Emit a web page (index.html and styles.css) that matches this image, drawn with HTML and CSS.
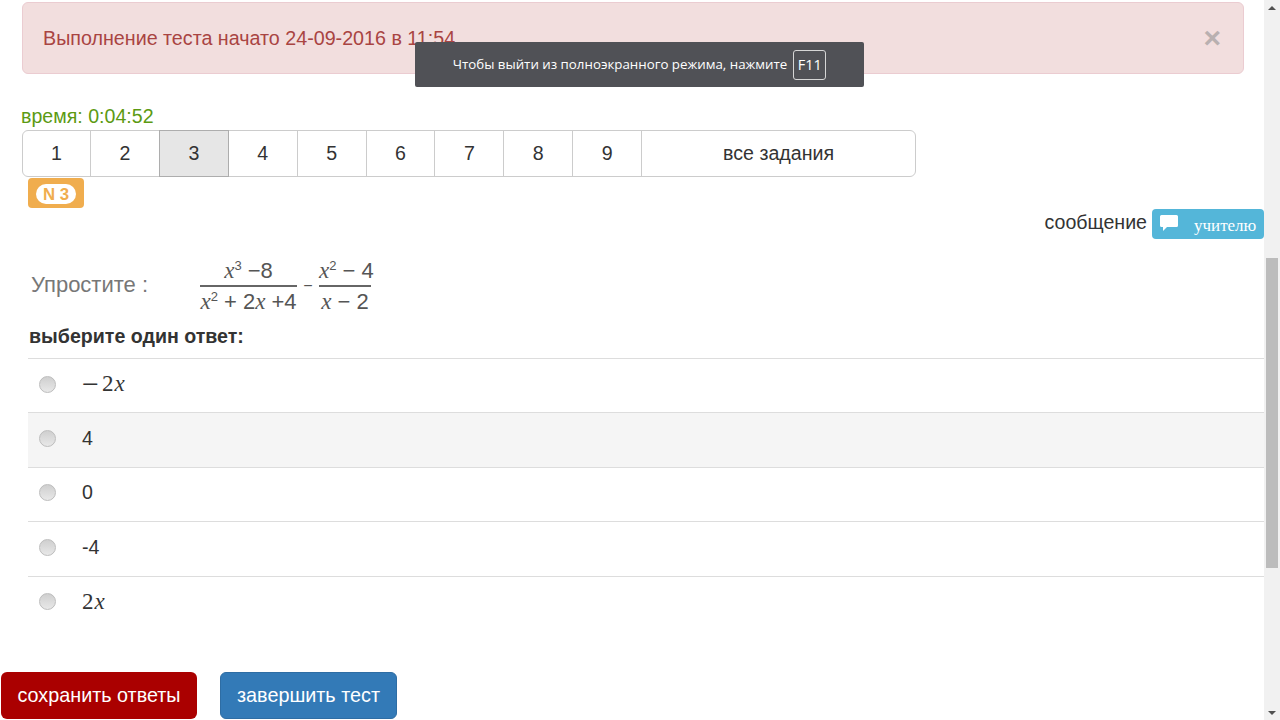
FILE: index.html
```html
<!DOCTYPE html>
<html lang="ru">
<head>
<meta charset="utf-8">
<title>Тест</title>
<link rel="stylesheet" href="styles.css">
</head>
<body>
<div class="page">
  <main class="content">
    <div class="alert">
      <span>Выполнение теста начато 24-09-2016 в 11:54</span>
      <span class="alert-close">×</span>
    </div>
    <div class="timer">время: 0:04:52</div>
    <nav class="tasks">
      <a class="task">1</a><a class="task">2</a><a class="task task-active">3</a><a class="task">4</a><a class="task">5</a><a class="task">6</a><a class="task">7</a><a class="task">8</a><a class="task">9</a><a class="task task-all">все задания</a>
    </nav>
    <div class="label-row"><span class="label"><span class="badge">N 3</span></span></div>
    <div class="message-row">
      <span class="message-text">сообщение</span>
      <button class="teacher-btn">
        <svg class="bubble" width="18" height="16" viewBox="0 0 18 16"><path d="M1.500 0h15A1.500 1.500 0 0 1 18 1.500v9a1.500 1.500 0 0 1-1.500 1.500H7l-4 4v-4H1.500A1.500 1.500 0 0 1 0 10.500v-9A1.500 1.500 0 0 1 1.500 0z" fill="#fff"/></svg>
        <span class="teacher-text">учителю</span>
      </button>
    </div>
    <div class="problem">
      <span class="problem-word">Упростите :</span>
      <span class="formula">
        <span class="frac frac-a"><span class="num"><i>x</i><sup>3</sup> −8</span><span class="den"><i>x</i><sup>2</sup> + 2<i>x</i> +4</span></span>
        <span class="minus">−</span>
        <span class="frac frac-b"><span class="num"><i>x</i><sup>2</sup> − 4</span><span class="den"><i>x</i> − 2</span></span>
      </span>
    </div>
    <div class="prompt">выберите один ответ:</div>
    <ul class="answers">
      <li class="answer"><input class="radio" type="radio" name="a"><span class="tex"><span class="tex-minus">−</span>2<i>x</i></span></li>
      <li class="answer answer-hover"><input class="radio" type="radio" name="a"><span>4</span></li>
      <li class="answer"><input class="radio" type="radio" name="a"><span>0</span></li>
      <li class="answer"><input class="radio" type="radio" name="a"><span>-4</span></li>
      <li class="answer"><input class="radio" type="radio" name="a"><span class="tex">2<i>x</i></span></li>
    </ul>
    <div class="actions">
      <button class="btn btn-save">сохранить ответы</button>
      <button class="btn btn-finish">завершить тест</button>
    </div>
  </main>
  <aside class="scrollbar">
    <span class="arrow arrow-up"></span>
    <span class="thumb"></span>
    <span class="arrow arrow-down"></span>
  </aside>
</div>
<div class="toast">
  <span>Чтобы выйти из полноэкранного режима, нажмите</span>
  <kbd class="key">F11</kbd>
</div>
</body>
</html>
```
FILE: styles.css
```css
* { box-sizing: border-box; }
html, body { margin: 0; height: 720px; overflow: hidden; background: #fff; }
body { font-family: "Liberation Sans", Arial, sans-serif; color: #333; font-size: 19.600px; }
.page { display: flex; height: 720px; }
.content { width: 1264px; flex: none; display: flex; flex-direction: column; }

.alert {
  margin: 2px 20px 0 22px; height: 72px; padding: 0 22px 0 20px;
  display: flex; align-items: center; justify-content: space-between;
  background: #f2dede; border: 1px solid #ebccd1; border-radius: 6px;
  color: #a94442; font-size: 19.700px;
}
.alert-close { font-size: 30px; font-weight: 700; color: #b9b0b0; line-height: 1; }

.timer { margin: 32px 0 0 21px; height: 24px; line-height: 21px; color: #5c9a12; }

.tasks { display: flex; margin-left: 22px; width: 894px; height: 47px; border: 1px solid #ccc; border-radius: 6px; }
.task { width: 68.900px; flex: none; display: flex; align-items: center; justify-content: center; border-left: 1px solid #ccc; color: #333; height: 45px; }
.task:first-child { border-left: 0; width: 67px; }
.task-active { height: 47px; margin-top: -1px; width: 69.900px; margin-right: -1px; position: relative; background: #e6e6e6; border: 1px solid #adadad; }
.task-all { flex: 1; }

.label-row { margin: 1px 0 0 28px; height: 30px; }
.label { display: inline-flex; align-items: center; justify-content: center; width: 56px; height: 30px; padding-top: 2px; background: #f0ad4e; border-radius: 4px; }
.badge { display: block; width: 40px; height: 20px; line-height: 21px; border-radius: 10px; background: #fff; color: #f0ad4e; font-size: 16.800px; font-weight: 700; text-align: center; }

.message-row { display: flex; justify-content: flex-end; align-items: flex-start; gap: 5px; margin-top: 1px; height: 30px; }
.message-text { line-height: 26px; color: #333; }
.teacher-btn { display: block; position: relative; width: 112px; height: 30px; padding: 0; border: 0; background: #54b6d9; border-radius: 4px; font-family: "Liberation Serif", serif; font-size: 17px; color: #fff; text-align: left; }
.bubble { position: absolute; left: 8px; top: 6px; }
.teacher-text { position: absolute; left: 42px; top: 7px; }

.problem { display: flex; align-items: center; height: 62px; margin: 16px 0 0 31px; }
.problem-word { width: 169px; color: #777; font-size: 22px; margin-top: -2px; }
.formula { display: flex; align-items: center; font-size: 22px; color: #555; }
.frac { display: flex; flex-direction: column; align-items: center; }
.frac-a { width: 97px; }
.frac-b { width: 52px; }
.num { height: 31px; line-height: 30px; border-bottom: 2px solid #666; width: 100%; text-align: center; white-space: nowrap; }
.den { height: 30px; line-height: 30px; white-space: nowrap; }
.frac i { font-family: "Liberation Serif", serif; font-size: 23px; }
.frac sup { font-size: 13px; line-height: 0; vertical-align: 8px; }
.minus { width: 22px; text-align: center; font-size: 16px; }

.prompt { margin: 10px 0 0 29px; height: 31px; line-height: 18px; font-weight: 700; color: #333; }

.answers { list-style: none; margin: 0 0 0 28px; padding: 0; }
.answer { display: flex; align-items: center; height: 54.400px; border-top: 1px solid #ddd; padding: 0 0 3px 11px; color: #333; }
.answer-hover { background: #f5f5f5; }
.radio { appearance: none; -webkit-appearance: none; margin: 0 26px 0 0; width: 17px; height: 17px; border-radius: 50%; border: 1px solid #bdbdbd; background: linear-gradient(#cfcfcf, #e8e8e8); }
.tex { font-family: "Liberation Serif", serif; font-size: 23px; letter-spacing: 1px; }
.tex-minus { font-size: 30px; line-height: 0; vertical-align: -3px; letter-spacing: 3px; }

.actions { display: flex; gap: 23px; margin-top: 42px; }
.btn { height: 47px; padding: 0; border: 1px solid transparent; border-radius: 6px; color: #fff; font-family: "Liberation Sans", sans-serif; font-size: 19.800px; }
.btn-save { width: 196px; background: #a00; margin-left: 1px; }
.btn-finish { width: 177px; background: #337ab7; border-color: #2e6da4; }

.scrollbar { width: 16px; flex: none; height: 720px; background: #f1f1f1; display: flex; flex-direction: column; align-items: center; }
.arrow { width: 0; height: 0; border-left: 4px solid transparent; border-right: 4px solid transparent; }
.arrow-up { margin-top: 6px; border-bottom: 4px solid #505050; }
.thumb { width: 12px; height: 310px; margin-top: 248px; background: #bcbcbc; }
.arrow-down { margin-top: 143px; border-top: 4px solid #505050; }

.toast {
  position: absolute; left: 415px; top: 42px; width: 449px; height: 45px;
  display: flex; align-items: center; justify-content: center; gap: 6px; padding: 0 0 2px 0;
  background: #505156; border-radius: 2px;
  color: #fff; font-family: "Open Sans", sans-serif; font-size: 13.300px;
}
.key { display: flex; align-items: center; justify-content: center; width: 33px; height: 30px; margin-top: 2px; border: 1px solid #d6d6d6; border-radius: 3px; font-family: "Open Sans", sans-serif; font-size: 14.500px; }
```
